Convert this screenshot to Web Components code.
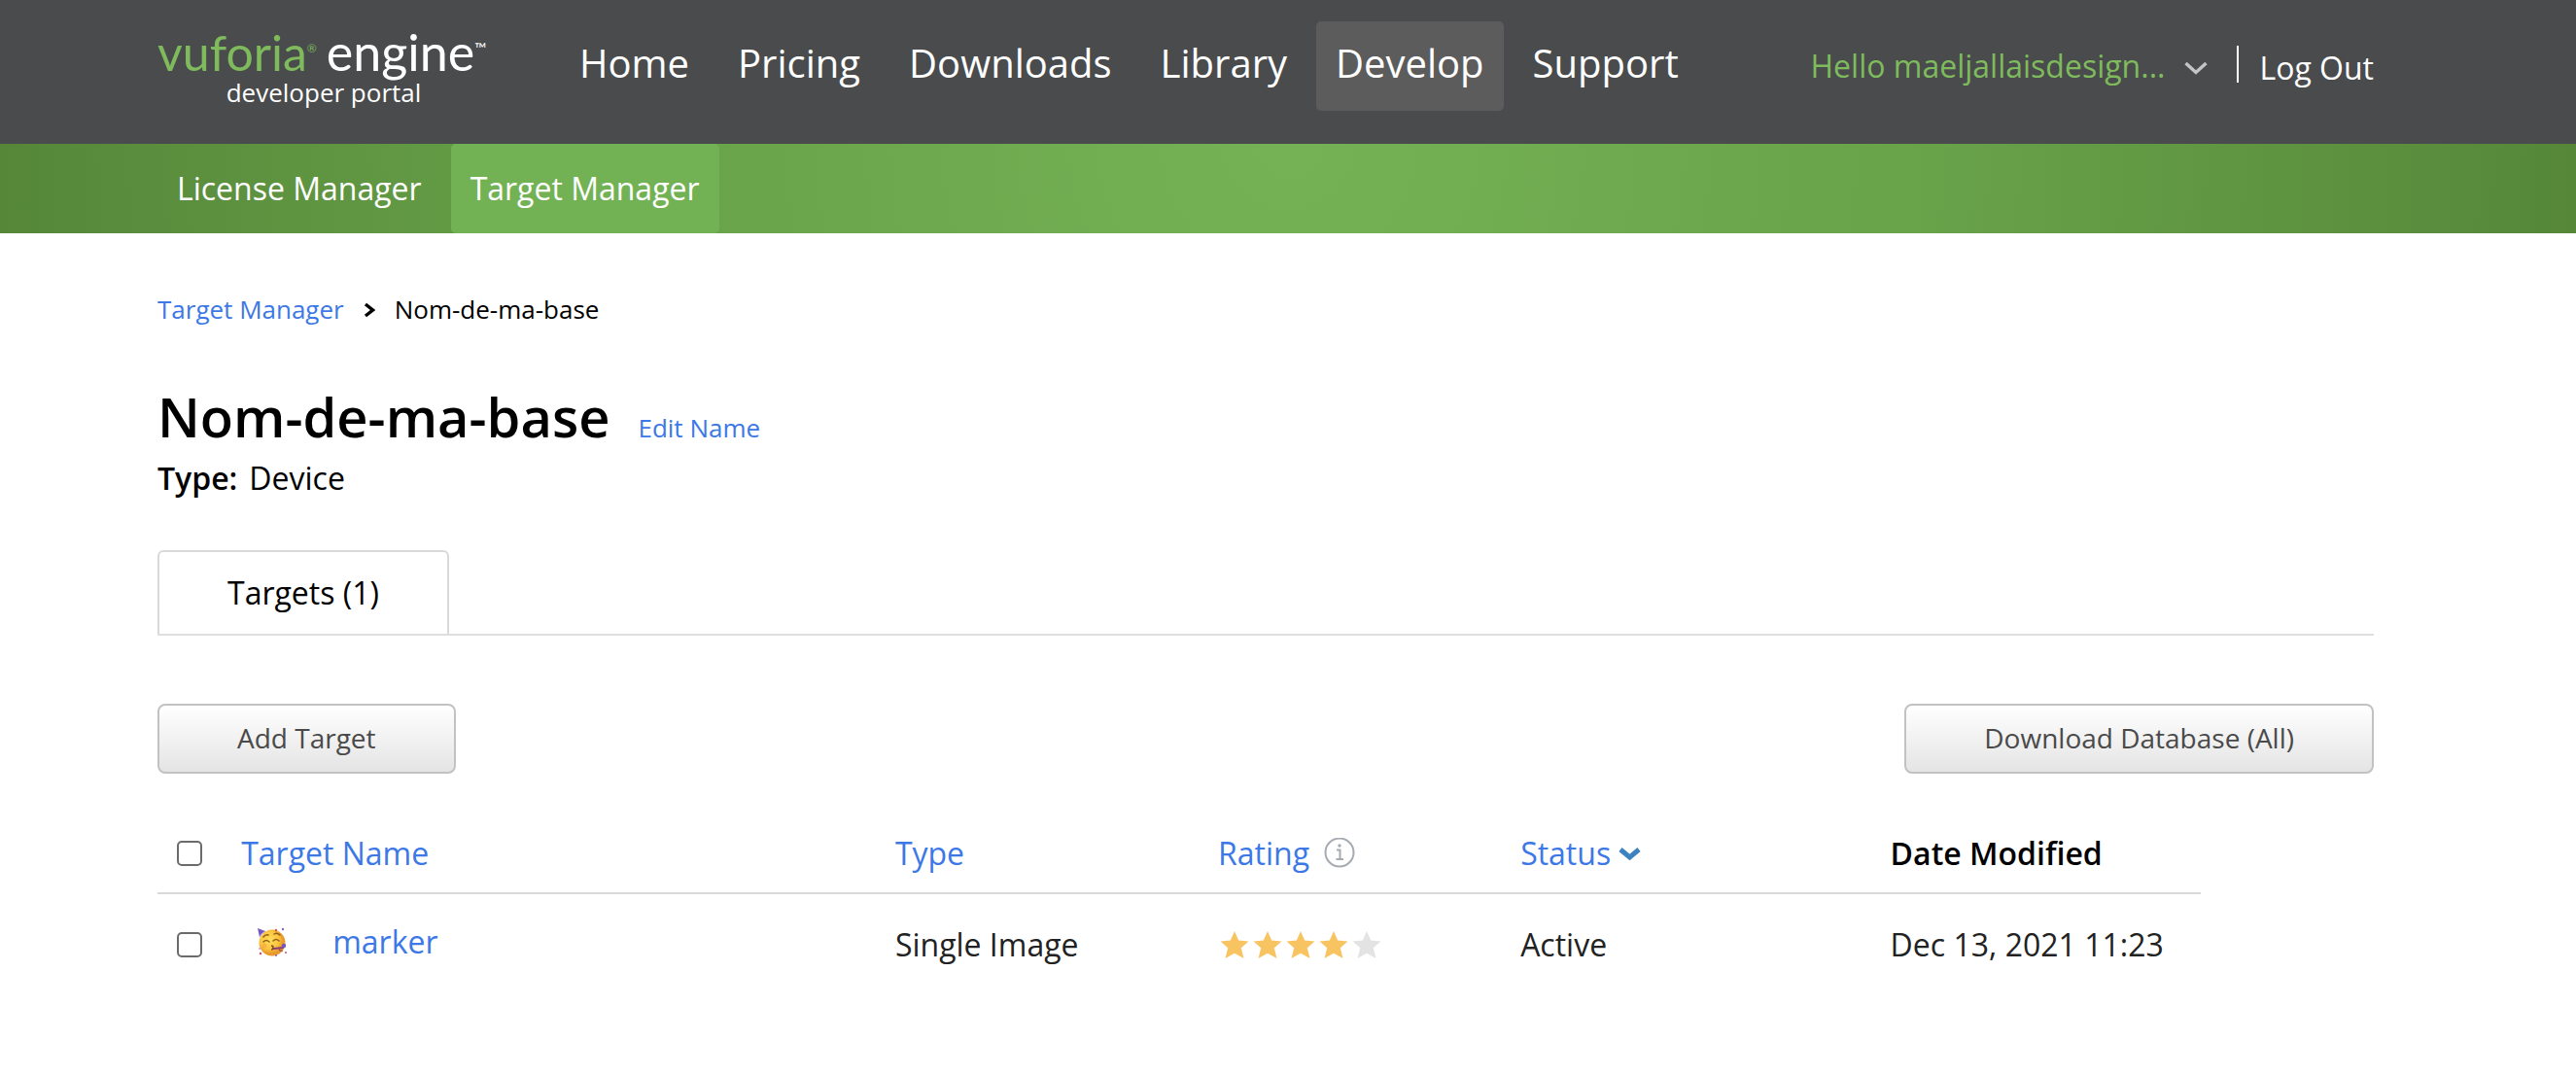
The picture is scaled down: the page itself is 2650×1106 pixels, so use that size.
<!DOCTYPE html>
<html lang="en">
<head>
<meta charset="utf-8">
<title>Target Manager - Nom-de-ma-base</title>
<style>
  body { margin: 0; background: #fff; color: #000; font-family: "Open Sans", "Noto Sans", sans-serif; font-size: 32px; line-height: 44px;
    --gutter-left: 162px; --gutter-right: 208px; --link: #3c78e6; --green: #75b255; --rule: #d9d9d9; }
  main { padding: 60px var(--gutter-right) 60px var(--gutter-left); }
</style>
</head>
<body>
<site-header>
  <site-logo slot="logo"></site-logo>
  <nav-link href="#home">Home</nav-link>
  <nav-link href="#pricing">Pricing</nav-link>
  <nav-link href="#downloads">Downloads</nav-link>
  <nav-link href="#library">Library</nav-link>
  <nav-link href="#develop" current>Develop</nav-link>
  <nav-link href="#support">Support</nav-link>
  <user-menu slot="user">Hello maeljallaisdesign...</user-menu>
</site-header>
<sub-nav>
  <sub-link href="#licenses">License Manager</sub-link>
  <sub-link href="#targets" current>Target Manager</sub-link>
</sub-nav>
<main>
  <bread-crumb parent="Target Manager">Nom-de-ma-base</bread-crumb>
  <database-title type="Device">Nom-de-ma-base</database-title>
  <tab-strip>Targets (1)</tab-strip>
  <action-bar>
    <action-button>Add Target</action-button>
    <action-button>Download Database (All)</action-button>
  </action-bar>
  <target-table></target-table>
</main>
<script>
  const define = (name, html, setup) => {
    const template = document.createElement('template');
    template.innerHTML = html;
    customElements.define(name, class extends HTMLElement {
      constructor() {
        super();
        this.attachShadow({ mode: 'open' }).append(template.content.cloneNode(true));
      }
      connectedCallback() { if (setup) setup(this, this.shadowRoot); }
    });
  };
  const setLink = (host, root) => {
    const a = root.querySelector('a');
    a.href = host.getAttribute('href');
    if (host.hasAttribute('current')) a.setAttribute('aria-current', 'page');
  };

  define('site-logo', `
    <style>
      :host { display: block; width: 342px; color: #fff; }
      a { display: block; color: inherit; text-decoration: none; }
      .brand { display: flex; align-items: baseline; font: 400 52px/54px Lato, sans-serif; }
      .brand b { font-weight: 400; font-size: 50px; color: #7fbb5c; }
      sup { font-size: 16px; line-height: 16px; align-self: flex-start; margin-top: 16px; }
      .reg { font-size: 12px; color: #7fbb5c; margin-right: 10px; }
      .portal { font-size: 26px; line-height: 28px; text-align: center; }
    </style>
    <a href="#"><div class="brand"><b>vuforia</b><sup class="reg">®</sup><span>engine</span><sup>™</sup></div>
    <div class="portal">developer portal</div></a>`);

  define('nav-link', `
    <style>
      :host { display: block; }
      a { display: block; padding: 1px 20px 7px; border-radius: 5px; font-size: 40px; line-height: 84px; color: #fff; text-decoration: none; }
      a[aria-current] { background: #5c5c5c; }
    </style><a><slot></slot></a>`, setLink);

  define('user-menu', `
    <style>
      :host { display: flex; align-items: center; color: #fff; }
      button { display: flex; align-items: center; gap: 20px; border: 0; padding: 0; background: none; font: inherit; color: #7fbb5c; }
      a { color: inherit; text-decoration: none; margin-top: 4px; }
      i { width: 2px; height: 38px; background: #fff; margin: 0 21px 4px 30px; }
      svg { margin-top: 4px; }
    </style>
    <button type="button"><slot></slot><svg width="24" height="16" viewBox="0 0 24 16" fill="none" stroke="#c4c4c6" stroke-width="3.500"><path d="M1.500 3 12 12.500 22.500 3"/></svg></button>
    <i></i><a href="#logout">Log Out</a>`);

  define('site-header', `
    <style>
      :host { display: flex; height: 148px; box-sizing: border-box; align-items: flex-start; background: #494b4d; padding: 22px var(--gutter-right) 0 var(--gutter-left); }
      nav { display: flex; gap: 10px; margin-left: 72px; }
      slot[name=logo] { display: block; padding-top: 4px; }
      slot[name=user] { display: block; margin-left: auto; padding-top: 22px; }
    </style>
    <slot name="logo"></slot><nav aria-label="Main"><slot></slot></nav><slot name="user"></slot>`);

  define('sub-link', `
    <style>
      :host { display: block; }
      a { display: block; padding: 0 20px; border-radius: 5px; line-height: 92px; color: #fff; text-decoration: none; }
      a[aria-current] { background: #73b254; }
    </style><a><slot></slot></a>`, setLink);

  define('sub-nav', `
    <style>
      :host { display: block; padding-left: var(--gutter-left); background: radial-gradient(circle farthest-corner at 50% 0, #75b255, #68a249 50%, #568739); }
      nav { display: flex; gap: 10px; }
    </style><nav aria-label="Develop"><slot></slot></nav>`);

  define('bread-crumb', `
    <style>
      :host { display: block; font-size: 26px; line-height: 36px; }
      nav { display: flex; align-items: center; }
      a { color: var(--link); text-decoration: none; }
      svg { margin: 2px 17px 0 19px; }
    </style>
    <nav aria-label="Breadcrumb"><a href="#targets"></a><svg width="16" height="16" viewBox="0 0 16 16" fill="none" stroke="#000" stroke-width="3.500"><path d="M3 2 10.500 8 3 14"/></svg><span><slot></slot></span></nav>`,
    (host, root) => { root.querySelector('a').textContent = host.getAttribute('parent'); });

  define('database-title', `
    <style>
      :host { display: block; margin-top: 54px; }
      div { display: flex; align-items: baseline; gap: 29px; }
      h1 { margin: 0; font-size: 56px; line-height: 76px; font-weight: 600; }
      a { font-size: 26px; color: var(--link); text-decoration: none; }
      p { display: flex; gap: 12px; margin: 4px 0 0; }
      b { font-weight: 600; }
    </style>
    <div><h1><slot></slot></h1><a href="#edit">Edit Name</a></div>
    <p><b>Type:</b><span></span></p>`,
    (host, root) => { root.querySelector('span').textContent = host.getAttribute('type'); });

  define('tab-strip', `
    <style>
      :host { display: flex; margin-top: 52px; border-bottom: 2px solid #dedede; }
      button { font: inherit; color: #000; background: #fff; padding: 20px 70px; border: 2px solid var(--rule); border-bottom: 0; border-radius: 6px 6px 0 0; }
    </style>
    <button type="button" role="tab" aria-selected="true"><slot></slot></button>`);

  define('action-bar', `
    <style>:host { display: flex; justify-content: space-between; margin-top: 70px; }</style><slot></slot>`);

  define('action-button', `
    <style>
      :host { display: block; }
      button { display: block; font: inherit; font-size: 28px; line-height: 66px; color: #4a4a4a; padding: 0 80px 2px; border: 2px solid #c2c2c2; border-radius: 8px; background: linear-gradient(#fff, #e4e4e4); }
    </style><button type="button"><slot></slot></button>`);

  define('star-rating', `
    <style>
      :host { display: flex; gap: 4px; padding-left: 2px; color: #f8c462; }
      svg.off { color: #e3e3e3; }
    </style>`,
    (host, root) => {
      const score = Number(host.getAttribute('value'));
      host.setAttribute('role', 'img');
      host.setAttribute('aria-label', score + ' of 5');
      for (let i = 0; i < 5; i++) {
        root.innerHTML += `<svg class="${i < score ? '' : 'off'}" width="30" height="30" viewBox="0 0 30 30"><path fill="currentColor" d="M15 1 19.200 10.500 29.500 11.500 21.800 18.300 24.500 29 15 23.800 5.500 29 8.200 18.300 .5 11.500 10.800 10.500Z"/></svg>`;
      }
    });

  define('party-face', `
    <style>:host { display: block; width: 32px; height: 32px; } svg { display: block; }</style>
    <svg width="32" height="32" viewBox="0 0 32 32" role="img" aria-label="Target preview">
      <defs><radialGradient id="skin" cx=".4" cy=".4"><stop offset="0" stop-color="#ffe05c"/><stop offset=".7" stop-color="#fbc53d"/><stop offset="1" stop-color="#e89b2c"/></radialGradient></defs>
      <circle cx="16" cy="17" r="13.500" fill="url(#skin)"/>
      <path d="M1 2 9 5Q5 7 3 11Z" fill="#7557c4"/><path d="M3 11Q5 7 9 5" fill="none" stroke="#b39be6" stroke-width="1"/>
      <path d="M7 11Q9 8 12 9M18 8Q21 6 24 9M7 16Q10 13 13 16M17 15Q20 12 23 15" fill="none" stroke="#90601c" stroke-width="1.500" stroke-linecap="round"/>
      <circle cx="8" cy="20" r="2.500" fill="#f6a04a" opacity=".6"/>
      <path d="M15 20Q18 20 16.500 22Q18 24 15 24" fill="none" stroke="#8a4b20" stroke-width="1.500"/>
      <path d="M17 22 27 21 28 23 17 24Z" fill="#81417f"/><circle cx="28" cy="20" r="2.200" fill="#7557c4"/><path d="M24 22Q22 26 27 25" fill="none" stroke="#a14a55" stroke-width="1.200"/>
      <g fill="#8a63c8"><circle cx="20" cy="4" r="1.200" fill="#d85a3a"/><circle cx="27" cy="3" r="1.200"/><circle cx="3" cy="23" r=".8"/><circle cx="4" cy="28" r="1.200" fill="#d64d6e"/><circle cx="30" cy="27" r="1" fill="#d64d6e"/><circle cx="20" cy="30" r="1"/></g>
    </svg>`);

  define('target-table', `
    <style>
      :host { display: block; margin-top: 60px; }
      table { width: 92.200%; table-layout: fixed; border-collapse: collapse; color: #222; }
      th, td { text-align: left; padding: 0; vertical-align: middle; white-space: nowrap; }
      th { font-weight: 400; padding-bottom: 18px; border-bottom: 2px solid var(--rule); }
      td { padding-top: 27px; }
      a { color: var(--link); text-decoration: none; }
      .row { display: flex; align-items: center; }
      .name { gap: 46px; padding: 0 0 6px 16px; }
      .date { font-weight: 600; color: #000; }
      .sel { padding-left: 20px; }
      input { appearance: none; display: block; box-sizing: border-box; width: 26px; height: 26px; margin: 0; border: 2px solid #6b6b6b; border-radius: 5px; background: #fff; }
      .check { width: 4.100% } .n { width: 32% } .t { width: 15.800% } .r { width: 14.800% } .s { width: 18.100% }
    </style>
    <table>
      <colgroup><col class="check"><col class="n"><col class="t"><col class="r"><col class="s"><col></colgroup>
      <thead><tr>
        <th class="sel"><input type="checkbox" aria-label="Select all targets"></th>
        <th><a href="#name">Target Name</a></th>
        <th><a href="#type">Type</a></th>
        <th><div class="row" style="gap:15px"><a href="#rating">Rating</a><svg width="32" height="32" viewBox="0 0 32 32" fill="none" stroke="#a6abb1" stroke-width="2"><circle cx="16" cy="15" r="14.500"/><path d="M13 12.500H16.500V21.500M12.500 22H20"/><circle cx="16" cy="8" r="1.700" fill="#a6abb1" stroke="none"/></svg></div></th>
        <th><div class="row" style="gap:8px"><a href="#status">Status</a><svg width="24" height="16" viewBox="0 0 24 16" fill="none" stroke="#3d83bf" stroke-width="5"><path d="M2 4 11.500 12 21 4"/></svg></div></th>
        <th class="date">Date Modified</th>
      </tr></thead>
      <tbody><tr>
        <td class="sel"><input type="checkbox" aria-label="Select marker"></td>
        <td><div class="row name"><party-face></party-face><a href="#marker">marker</a></div></td>
        <td>Single Image</td>
        <td><star-rating value="4"></star-rating></td>
        <td>Active</td>
        <td>Dec 13, 2021 11:23</td>
      </tr></tbody>
    </table>`);
</script>
</body>
</html>
